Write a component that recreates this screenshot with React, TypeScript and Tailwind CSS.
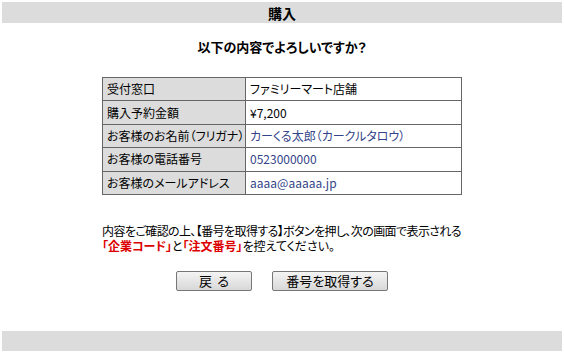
export default function App() {
  const rows = [
    { label: "受付窓口", value: "ファミリーマート店舗", blue: false },
    { label: "購入予約金額", value: "¥7,200", blue: false },
    { label: "お客様のお名前（フリガナ）", value: "カーくる太郎（カークルタロウ）", blue: true },
    { label: "お客様の電話番号", value: " 0523000000", blue: true },
    { label: "お客様のメールアドレス", value: "aaaa@aaaaa.jp", blue: true },
  ];

  return (
    <div className="w-[564px] h-[353px] bg-white p-[2px] text-[12px] text-black font-['Noto_Sans_CJK_JP',sans-serif] [font-feature-settings:'palt'] leading-none">
      <div className="h-[21px] bg-[#dcdcdc] flex items-center justify-center font-bold text-[14px]">
        購入
      </div>

      <div className="mt-[17px] text-center font-bold text-[13px] h-[14px]">
        以下の内容でよろしいですか？
      </div>

      <table className="mt-[23px] mx-auto w-[360px] border-collapse">
        <tbody>
          {rows.map((r) => (
            <tr key={r.label} className="h-[23.4px]">
              <td className="w-[143px] border border-[#666666] bg-[#dcdcdc] pl-[4px] whitespace-nowrap">{r.label}</td>
              <td className={`border border-[#666666] pl-[4px] ${r.blue ? "text-[#334488]" : ""}`}>
                {r.value}
              </td>
            </tr>
          ))}
        </tbody>
      </table>

      <div className="w-[360px] mx-auto mt-[28px] flex flex-col whitespace-nowrap">
        <p className="h-[15px] leading-[15px] tracking-[-0.6px]">
          内容をご確認の上、【番号を取得する】ボタンを押し、次の画面で表示される
        </p>
        <p className="h-[15px] leading-[15px]">
          <span className="text-[#dd0000] font-bold">「企業コード」</span>
          <span>と</span>
          <span className="text-[#dd0000] font-bold">「注文番号」</span>
          <span>を控えてください。</span>
        </p>
      </div>

      <div className="mt-[18px] flex justify-center gap-[20px]">
        <button className="w-[76px] h-[20px] border border-[#777777] rounded-[2px] bg-gradient-to-b from-[#f4f4f4] to-[#d8d8d8] text-[13px] tracking-[0.4em] pl-[0.4em]">
          戻る
        </button>
        <button className="w-[116px] h-[20px] border border-[#777777] rounded-[2px] bg-gradient-to-b from-[#f4f4f4] to-[#d8d8d8] text-[13px]">
          番号を取得する
        </button>
      </div>

      <div className="mt-[40px] h-[20px] bg-[#dcdcdc]" />
    </div>
  );
}
